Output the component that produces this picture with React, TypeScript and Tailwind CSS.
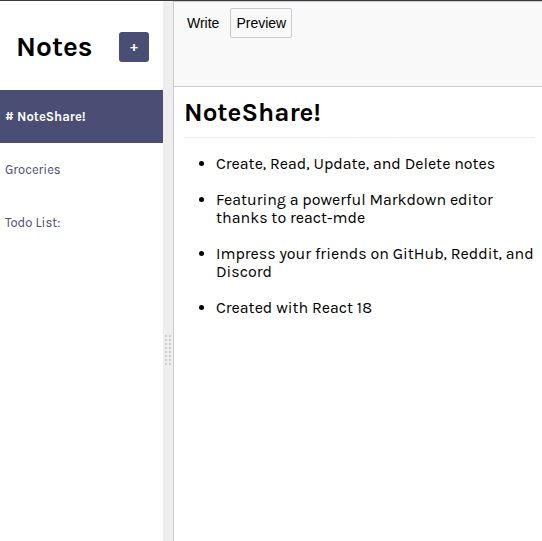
const notes = [
  { id: 1, title: "# NoteShare!" },
  { id: 2, title: "Groceries" },
  { id: 3, title: "Todo List:" },
];

const features = [
  "Create, Read, Update, and Delete notes",
  "Featuring a powerful Markdown editor thanks to react-mde",
  "Impress your friends on GitHub, Reddit, and Discord",
  "Created with React 18",
];

export default function App() {
  const current = 1;

  return (
    <div className="h-[541px] w-[542px] flex flex-col bg-white overflow-hidden font-['Karla','Inter',sans-serif]">
      <div className="h-px bg-[#3a3a3a]" />
      <div className="flex flex-1 min-h-0">
        {/* sidebar */}
        <section className="w-[163px] shrink-0 bg-white">
          <div className="h-[89px] flex items-center justify-between pl-4 pr-[14px] pt-[2px]">
            <h3 className="text-[28px] font-bold text-black">Notes</h3>
            <button className="w-[30px] h-[30px] rounded-[3px] bg-[#4a4e74] text-white text-sm font-bold flex items-center justify-center">
              +
            </button>
          </div>
          {notes.map((note) => (
            <div
              key={note.id}
              className={
                note.id === current
                  ? "h-[53px] flex items-center px-[5px] bg-[#4a4e74] text-white text-[13px] font-bold"
                  : "h-[53px] flex items-center px-[5px] text-[#4a4e74] text-[13px]"
              }
            >
              {note.title}
            </div>
          ))}
        </section>

        {/* gutter */}
        <div className="w-[11px] shrink-0 bg-[#eeeeee] border-r border-[#c8ccd0] flex items-center justify-center">
          <div className="grid grid-cols-2 gap-x-[2px] gap-y-[2px] mt-[158px]">
            {Array.from({ length: 16 }).map((_, i) => (
              <span key={i} className="w-[2px] h-[2px] bg-[#cfcfcf]" />
            ))}
          </div>
        </div>

        {/* editor */}
        <section className="flex-1 min-w-0 flex flex-col border-t border-[#c8ccd0]">
          <div className="h-[85px] shrink-0 bg-[#f9f9f9] border-b border-[#c8ccd0] flex items-start gap-[2px] pl-[4px] pt-[6px] font-['Liberation_Sans',Arial,sans-serif] text-sm text-black">
            <button className="h-[30px] px-2 border border-transparent">Write</button>
            <button className="h-[30px] px-[5px] border border-[#c8ccd0] rounded-[2px] bg-[#f9f9f9]">
              Preview
            </button>
          </div>
          <div className="flex-1 pl-[10px] pr-[2px] pt-[6px]">
            <h1 className="text-[26px] font-bold text-black pb-[5px] mr-[5px] border-b border-[#eaecef]">
              NoteShare!
            </h1>
            <ul className="list-disc pl-[32px] mt-[17px] text-[16px] leading-[18px] text-black space-y-[18px]">
              {features.map((f) => (
                <li key={f}>{f}</li>
              ))}
            </ul>
          </div>
        </section>
      </div>
    </div>
  );
}
